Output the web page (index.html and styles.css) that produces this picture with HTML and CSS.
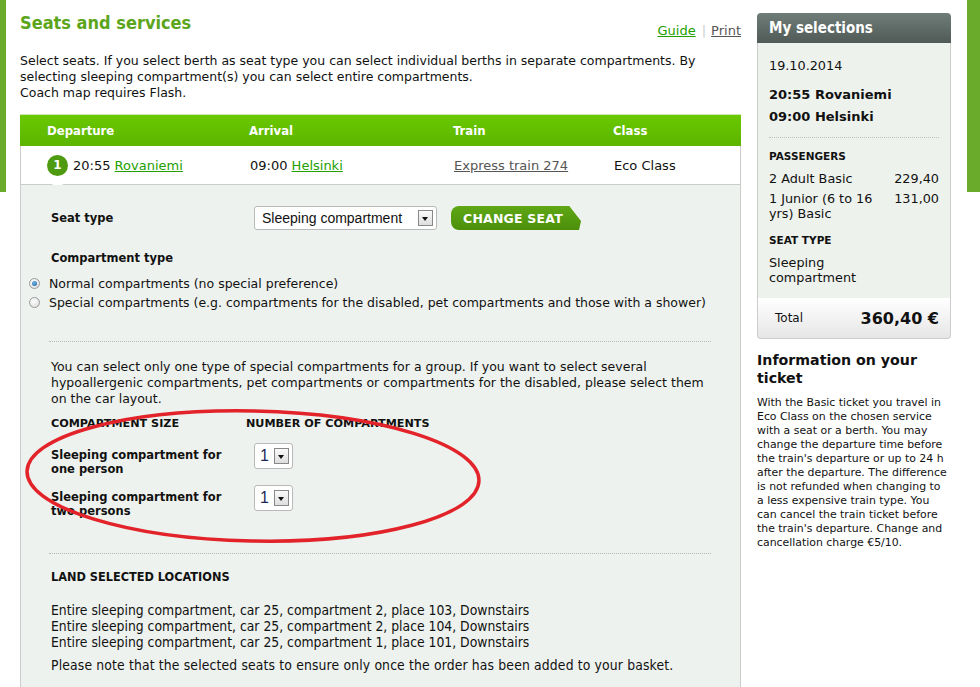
FILE: index.html
```html
<!DOCTYPE html>
<html>
<head>
<meta charset="utf-8">
<link rel="stylesheet" href="styles.css">
</head>
<body>
<div class="page">
  <div class="stripe stripe-left"></div>
  <div class="main">
    <div class="title-row">
      <h1 class="title">Seats and services</h1>
      <div class="tools"><a class="lnk-green" href="#">Guide</a><span class="sep">|</span><a class="lnk-grey" href="#">Print</a></div>
    </div>
    <p class="intro">Select seats. If you select berth as seat type you can select individual berths in separate compartments. By selecting sleeping compartment(s) you can select entire compartments.<br>Coach map requires Flash.</p>

    <div class="trip">
      <div class="trip-head">
        <span>Departure</span><span>Arrival</span><span>Train</span><span>Class</span>
      </div>
      <div class="trip-row">
        <span class="cell"><span class="badge">1</span>20:55 <a class="lnk-green" href="#">Rovaniemi</a></span>
        <span class="cell">09:00 <a class="lnk-green" href="#">Helsinki</a></span>
        <span class="cell"><a class="lnk-grey" href="#">Express train 274</a></span>
        <span class="cell">Eco Class</span>
        <span class="notch"></span>
      </div>
      <div class="panel">
        <div class="seat-row">
          <span class="lbl">Seat type</span>
          <span class="select wide"><span class="sel-val">Sleeping compartment</span><span class="sel-btn"></span></span>
          <span class="btn-change">CHANGE SEAT</span>
        </div>
        <div class="lbl ctype">Compartment type</div>
        <div class="radio-row"><span class="radio on"></span>Normal compartments (no special preference)</div>
        <div class="radio-row"><span class="radio"></span>Special compartments (e.g. compartments for the disabled, pet compartments and those with a shower)</div>
        <div class="dots first"></div>
        <p class="note">You can select only one type of special compartments for a group. If you want to select several hypoallergenic compartments, pet compartments or compartments for the disabled, please select them on the car layout.</p>
        <div class="size-grid">
          <span class="cap">COMPARTMENT SIZE</span><span class="cap">NUMBER OF COMPARTMENTS</span>
          <span class="lbl sz">Sleeping compartment for one person</span>
          <span class="select num"><span class="sel-val">1</span><span class="sel-btn"></span></span>
          <span class="lbl sz">Sleeping compartment for two persons</span>
          <span class="select num"><span class="sel-val">1</span><span class="sel-btn"></span></span>
        </div>
        <div class="dots second"></div>
        <div class="land">
          <div class="land-title">LAND SELECTED LOCATIONS</div>
          <div class="land-list">
            <div>Entire sleeping compartment, car 25, compartment 2, place 103, Downstairs</div>
            <div>Entire sleeping compartment, car 25, compartment 2, place 104, Downstairs</div>
            <div>Entire sleeping compartment, car 25, compartment 1, place 101, Downstairs</div>
          </div>
          <div class="land-note">Please note that the selected seats to ensure only once the order has been added to your basket.</div>
        </div>
        <svg class="circle" width="480" height="140" viewBox="0 0 480 140"><ellipse cx="240" cy="68" rx="226" ry="65" fill="none" stroke="#e2232a" stroke-width="3.5" transform="rotate(1.2 240 68)"/></svg>
      </div>
    </div>
  </div>

  <div class="side">
    <div class="box">
      <div class="box-head">My selections</div>
      <div class="box-body">
        <div class="date">19.10.2014</div>
        <div class="route">20:55 Rovaniemi</div>
        <div class="route">09:00 Helsinki</div>
        <div class="sdots"></div>
        <div class="scap">PASSENGERS</div>
        <div class="prow"><span>2 Adult Basic</span><span>229,40</span></div>
        <div class="prow"><span>1 Junior (6 to 16 yrs) Basic</span><span>131,00</span></div>
        <div class="scap st">SEAT TYPE</div>
        <div class="stype">Sleeping compartment</div>
      </div>
      <div class="box-total"><span>Total</span><span class="sum">360,40 €</span></div>
    </div>
    <h2 class="info-h">Information on your ticket</h2>
    <p class="info-p">With the Basic ticket you travel in Eco Class on the chosen service with a seat or a berth. You may change the departure time before the train's departure or up to 24 h after the departure. The difference is not refunded when changing to<br>a less expensive train type. You can cancel the train ticket before the train's departure. Change and cancellation charge €5/10.</p>
  </div>
  <div class="stripe stripe-right"></div>
</div>
</body>
</html>
```

FILE: styles.css
```css
html, body {
  margin: 0;
  padding: 0;
  background: #fff;
}
body {
  font-family: "DejaVu Sans", Verdana, sans-serif;
  color: #111;
  font-size: 12.5px;
  overflow: hidden;
}
.page {
  display: flex;
  align-items: flex-start;
  width: 980px;
  height: 687px;
}
.stripe {
  height: 192px;
  background: #6aab2c;
  flex: none;
}
.stripe-left { width: 6px; }
.stripe-right { width: 13px; margin-left: 16px; }

.main {
  margin-left: 14px;
  width: 721px;
  flex: none;
}
.title-row {
  display: flex;
  justify-content: space-between;
  height: 40px;
}
.title {
  margin: 0;
  padding-top: 11px;
  font-family: "DejaVu Sans Condensed", Tahoma, sans-serif;
  font-size: 18px;
  line-height: 24px;
  color: #5ca51b;
  font-weight: bold;
}
.tools {
  padding-top: 23px;
  font-size: 13px;
  line-height: 16px;
}
.tools .sep { color: #ccc; margin: 0 5px 0 6px; }
a { text-decoration: underline; }
.lnk-green { color: #22a000; }
.lnk-grey { color: #555; }

.intro {
  margin: 13px 0 0;
  font-size: 12.5px;
  line-height: 16px;
}

.trip { margin-top: 13px; }
.trip-head {
  display: grid;
  grid-template-columns: 202px 204px 160px 1fr;
  padding-left: 27px;
  height: 32px;
  align-items: center;
  background: linear-gradient(#6ac800, #5cb400);
  color: #fff;
  font-family: "DejaVu Sans Condensed", Tahoma, sans-serif;
  font-weight: bold;
  font-size: 13px;
  border-top: 1px solid #cfe5b5;
  box-sizing: border-box;
}
.trip-row {
  position: relative;
  display: grid;
  grid-template-columns: 202px 204px 160px 1fr;
  padding-left: 27px;
  height: 39px;
  align-items: center;
  background: #fff;
  border-left: 1px solid #ccc;
  border-right: 1px solid #ccc;
  border-bottom: 1px solid #ccc;
  box-sizing: border-box;
  font-size: 13px;
}
.trip-row .cell { display: flex; align-items: center; white-space: pre; }
.badge {
  width: 21px;
  height: 21px;
  border-radius: 50%;
  background: #4e9a10;
  color: #fff;
  font-weight: bold;
  font-size: 12px;
  display: inline-flex;
  align-items: center;
  justify-content: center;
  margin-right: 5px;
  margin-left: -1px;
}
.notch {
  position: absolute;
  left: 32px;
  bottom: -5px;
  width: 8px;
  height: 8px;
  background: #fff;
  border-right: 1px solid #ccc;
  border-bottom: 1px solid #ccc;
  transform: rotate(45deg);
}

.panel {
  position: relative;
  background: #eef2ee;
  border-left: 1px solid #ccc;
  border-right: 1px solid #ccc;
  padding: 21px 30px 30px 30px;
  height: 520px;
  box-sizing: border-box;
}
.lbl { font-weight: bold; font-size: 11.5px; }
.seat-row {
  display: grid;
  grid-template-columns: 203px 197px auto;
  align-items: center;
  height: 24px;
}
.select {
  display: flex;
  align-items: center;
  justify-content: space-between;
  background: #fff;
  border: 1px solid #b9b9b9;
  border-radius: 3px;
  box-sizing: border-box;
  font-family: "Liberation Sans", Arial, sans-serif;
  padding: 0 3px 0 7px;
}
.select.wide { width: 183px; height: 24px; font-size: 14px; }
.select.num { width: 39px; height: 26px; font-size: 16px; color: #1c2a5a; padding-left: 5px; }
.sel-btn {
  position: relative;
  width: 15px;
  height: 16px;
  background: linear-gradient(#fafafa, #dedede);
  border: 1px solid #888;
  box-sizing: border-box;
}
.sel-btn::after {
  content: "";
  position: absolute;
  left: 3px;
  top: 6px;
  border-left: 3.5px solid transparent;
  border-right: 3.5px solid transparent;
  border-top: 4px solid #111;
}
.btn-change {
  display: inline-flex;
  align-items: center;
  justify-content: center;
  width: 130px;
  height: 24px;
  padding-right: 6px;
  box-sizing: border-box;
  background: linear-gradient(#5fa716, #4c8f0a);
  color: #fff;
  font-weight: bold;
  font-size: 12.5px;
  letter-spacing: 0.2px;
  border-radius: 8px 2px 2px 8px;
  clip-path: polygon(0 0, 91% 0, 100% 62%, 98.5% 100%, 0 100%);
}
.ctype { margin-top: 20px; line-height: 16px; }
.radio-row {
  display: flex;
  align-items: center;
  margin-left: -22px;
  height: 19px;
  font-size: 12.5px;
  white-space: nowrap;
}
.ctype + .radio-row { margin-top: 8px; }
.radio {
  width: 11px;
  height: 11px;
  border-radius: 50%;
  border: 1px solid #9a9a9a;
  background: radial-gradient(circle at 40% 35%, #fff, #d8d8d8);
  box-sizing: border-box;
  margin-right: 9px;
  position: relative;
  flex: none;
}
.radio.on::after {
  content: "";
  position: absolute;
  left: 2px; top: 2px;
  width: 5px; height: 5px;
  border-radius: 50%;
  background: radial-gradient(circle at 40% 35%, #6fb6e8, #1c5f9a);
}
.dots {
  border-top: 1px dotted #b8b8b8;
  margin-left: -2px;
  width: 662px;
}
.dots.first { margin-top: 29px; }
.note {
  margin: 17px 0 0;
  font-size: 12.5px;
  line-height: 16px;
}
.size-grid {
  display: grid;
  grid-template-columns: 195px auto;
  grid-template-rows: 16px 42px 42px;
  margin-top: 9px;
  align-items: start;
}
.cap { font-weight: bold; font-size: 11.2px; line-height: 16px; }
.sz { line-height: 14px; width: 180px; padding-top: 16px; }
.select.num { margin-top: 11px; margin-left: 8px; }
.dots.second { margin-top: 37px; }
.land {
  font-family: "DejaVu Sans Condensed", Tahoma, sans-serif;
  font-size: 13.8px;
}
.land-title { font-weight: bold; font-size: 12.6px; margin-top: 15px; line-height: 16px; }
.land-list { margin-top: 17px; line-height: 16px; }
.land-note { margin-top: 7px; line-height: 16px; letter-spacing: 0.15px; }
.circle {
  position: absolute;
  left: -8px;
  top: 223px;
}

.side {
  margin-left: 16px;
  width: 194px;
  flex: none;
}
.box { margin-top: 13px; }
.box-head {
  height: 30px;
  background: linear-gradient(#6f7d79, #505a57);
  border-radius: 4px 4px 0 0;
  color: #fff;
  font-family: "DejaVu Sans Condensed", Tahoma, sans-serif;
  font-weight: bold;
  font-size: 15px;
  line-height: 31px;
  padding-left: 12px;
}
.box-body {
  background: #eef2ed;
  border-left: 1px solid #ccc;
  border-right: 1px solid #ccc;
  padding: 15px 11px 13px 11px;
  font-size: 12.8px;
}
.date { line-height: 16px; }
.route { font-weight: bold; font-size: 13px; line-height: 22px; }
.date + .route { margin-top: 10px; }
.sdots { border-top: 1px dotted #c0c0c0; margin-top: 9px; }
.scap { font-weight: bold; font-size: 10.5px; margin-top: 11px; line-height: 14px; }
.scap.st { margin-top: 12px; }
.prow {
  display: flex;
  justify-content: space-between;
  line-height: 15px;
  margin-top: 8px;
}
.prow + .prow { margin-top: 5px; }
.prow span:first-child { width: 110px; }
.stype { line-height: 15px; margin-top: 8px; width: 100px; }
.box-total {
  display: flex;
  justify-content: space-between;
  align-items: center;
  height: 40px;
  padding: 0 11px 0 17px;
  background: linear-gradient(#ffffff, #e6e6e6);
  border: 1px solid #ccc;
  border-top: none;
  border-radius: 0 0 4px 4px;
  font-size: 12px;
}
.sum { font-weight: bold; font-size: 16px; }
.info-h {
  margin: 12px 0 0;
  font-size: 14.2px;
  line-height: 18px;
  font-weight: bold;
}
.info-p {
  margin: 9px 0 0;
  font-size: 10.9px;
  line-height: 14px;
}
```
